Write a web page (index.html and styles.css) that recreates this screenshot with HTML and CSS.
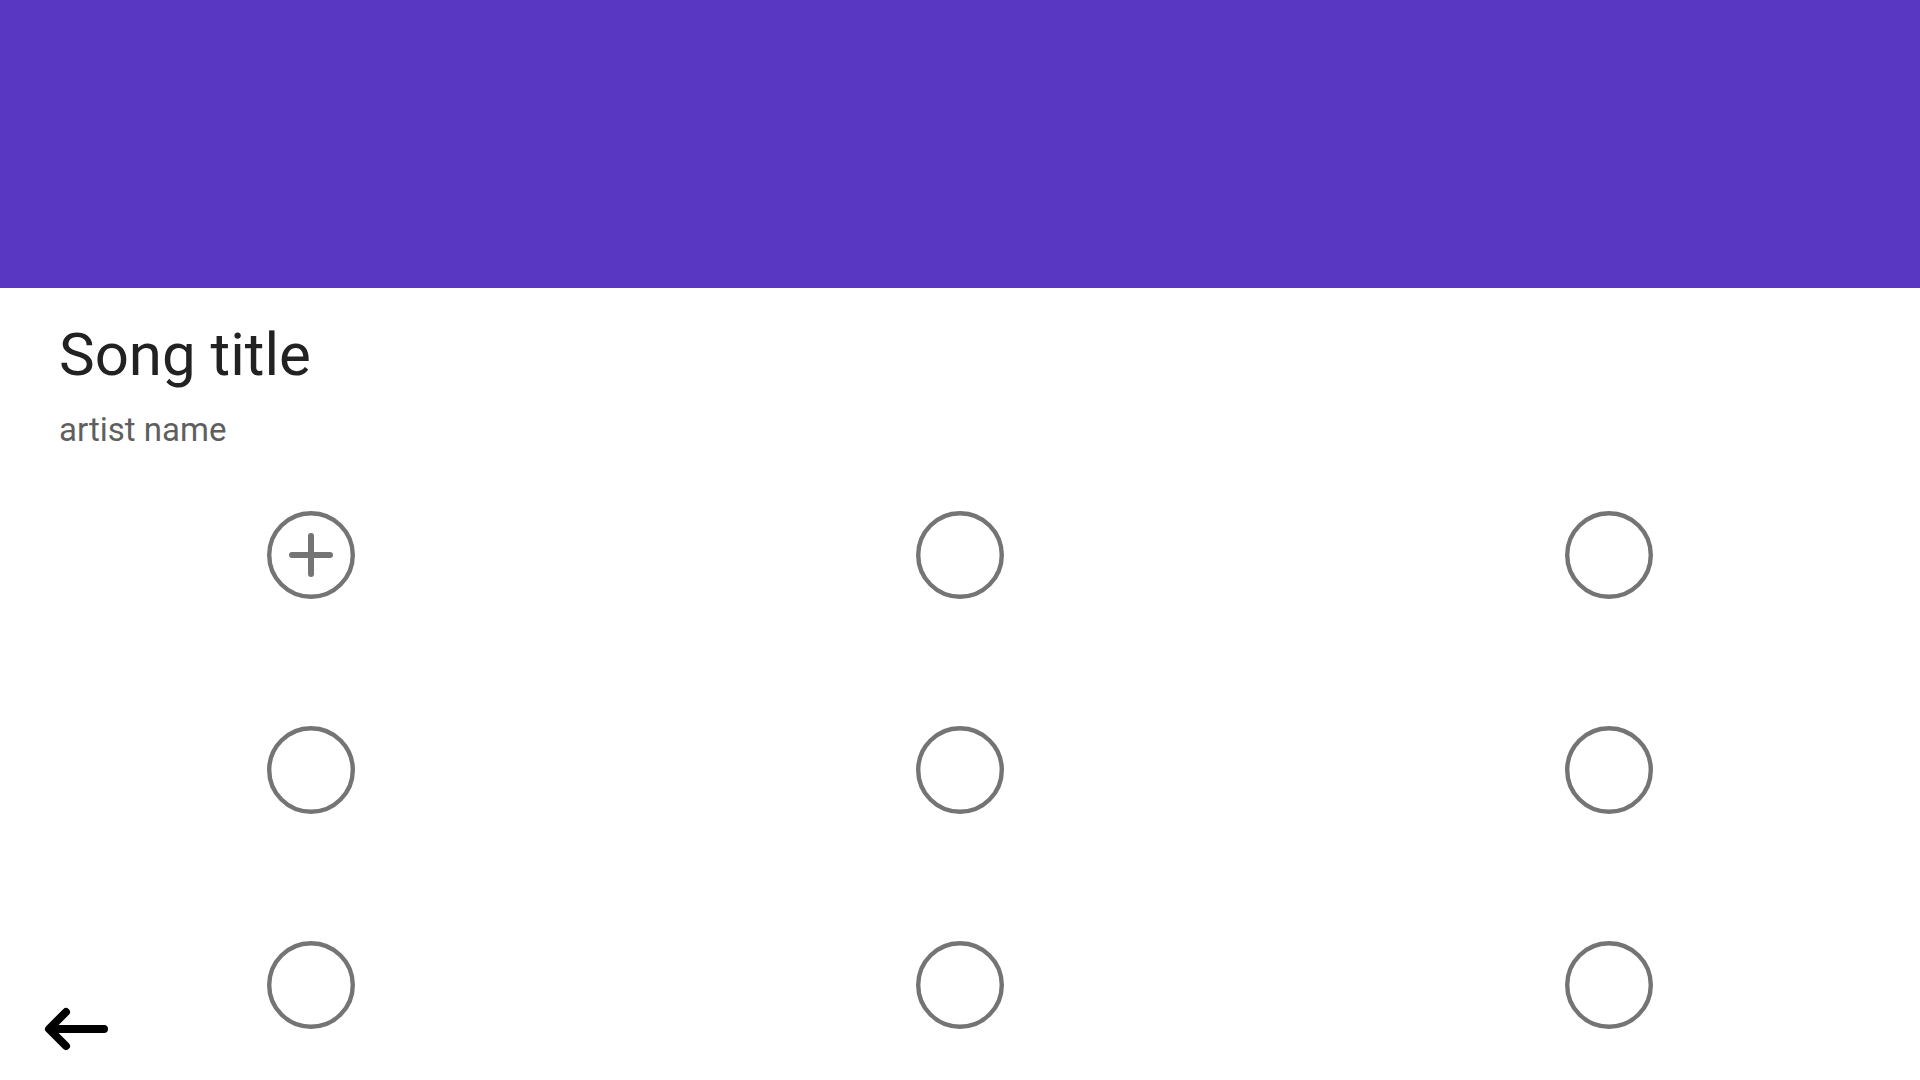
FILE: index.html
```html
<!DOCTYPE html>
<html lang="en">
<head>
<meta charset="utf-8">
<title>Song</title>
<link rel="stylesheet" href="styles.css">
</head>
<body>
<div class="screen">
  <header class="cover"></header>
  <section class="info">
    <h1 class="title">Song title</h1>
    <p class="artist">artist name</p>
  </section>
  <section class="pads">
    <div class="pad">
      <svg viewBox="0 0 88 88" width="88" height="88"><circle cx="44" cy="44" r="41.8" class="ring"/><path d="M25 44H63M44 25V63" class="plus"/></svg>
    </div>
    <div class="pad"><svg viewBox="0 0 88 88" width="88" height="88"><circle cx="44" cy="44" r="41.8" class="ring"/></svg></div>
    <div class="pad"><svg viewBox="0 0 88 88" width="88" height="88"><circle cx="44" cy="44" r="41.8" class="ring"/></svg></div>
    <div class="pad"><svg viewBox="0 0 88 88" width="88" height="88"><circle cx="44" cy="44" r="41.8" class="ring"/></svg></div>
    <div class="pad"><svg viewBox="0 0 88 88" width="88" height="88"><circle cx="44" cy="44" r="41.8" class="ring"/></svg></div>
    <div class="pad"><svg viewBox="0 0 88 88" width="88" height="88"><circle cx="44" cy="44" r="41.8" class="ring"/></svg></div>
    <div class="pad"><svg viewBox="0 0 88 88" width="88" height="88"><circle cx="44" cy="44" r="41.8" class="ring"/></svg></div>
    <div class="pad"><svg viewBox="0 0 88 88" width="88" height="88"><circle cx="44" cy="44" r="41.8" class="ring"/></svg></div>
    <div class="pad"><svg viewBox="0 0 88 88" width="88" height="88"><circle cx="44" cy="44" r="41.8" class="ring"/></svg></div>
  </section>
  <button class="back" aria-label="Back">
    <svg viewBox="0 0 72 48" width="72" height="48"><path d="M64 24H10M26 7L9 24L26 41"/></svg>
  </button>
</div>
</body>
</html>
```

FILE: styles.css
```css
html, body {
  margin: 0;
  padding: 0;
  background: #ffffff;
}

.screen {
  position: relative;
  width: 1920px;
  height: 1080px;
  overflow: hidden;
  font-family: Roboto, "Noto Sans", sans-serif;
}

.cover {
  height: 288px;
  background: #5937c2;
}

.info {
  padding: 31px 0 0 59px;
}

.title {
  margin: 0;
  font-size: 60px;
  font-weight: 400;
  line-height: normal;
  color: #222222;
}

.artist {
  margin: 20px 0 0;
  font-size: 33px;
  font-weight: 400;
  line-height: normal;
  color: #5f5f5f;
}

.pads {
  display: grid;
  grid-template-columns: repeat(3, 88px);
  column-gap: 561px;
  row-gap: 127px;
  padding-left: 267px;
  margin-top: 62px;
}

.pad {
  width: 88px;
  height: 88px;
}

.pad svg {
  display: block;
}

.ring {
  fill: none;
  stroke: #747474;
  stroke-width: 4.4;
}

.plus {
  fill: none;
  stroke: #747474;
  stroke-width: 6;
  stroke-linecap: round;
}

.back {
  position: absolute;
  left: 40px;
  top: 1005px;
  width: 72px;
  height: 48px;
  padding: 0;
  border: 0;
  background: transparent;
}

.back svg {
  display: block;
}

.back path {
  fill: none;
  stroke: #000000;
  stroke-width: 8;
  stroke-linecap: round;
  stroke-linejoin: round;
}
```
